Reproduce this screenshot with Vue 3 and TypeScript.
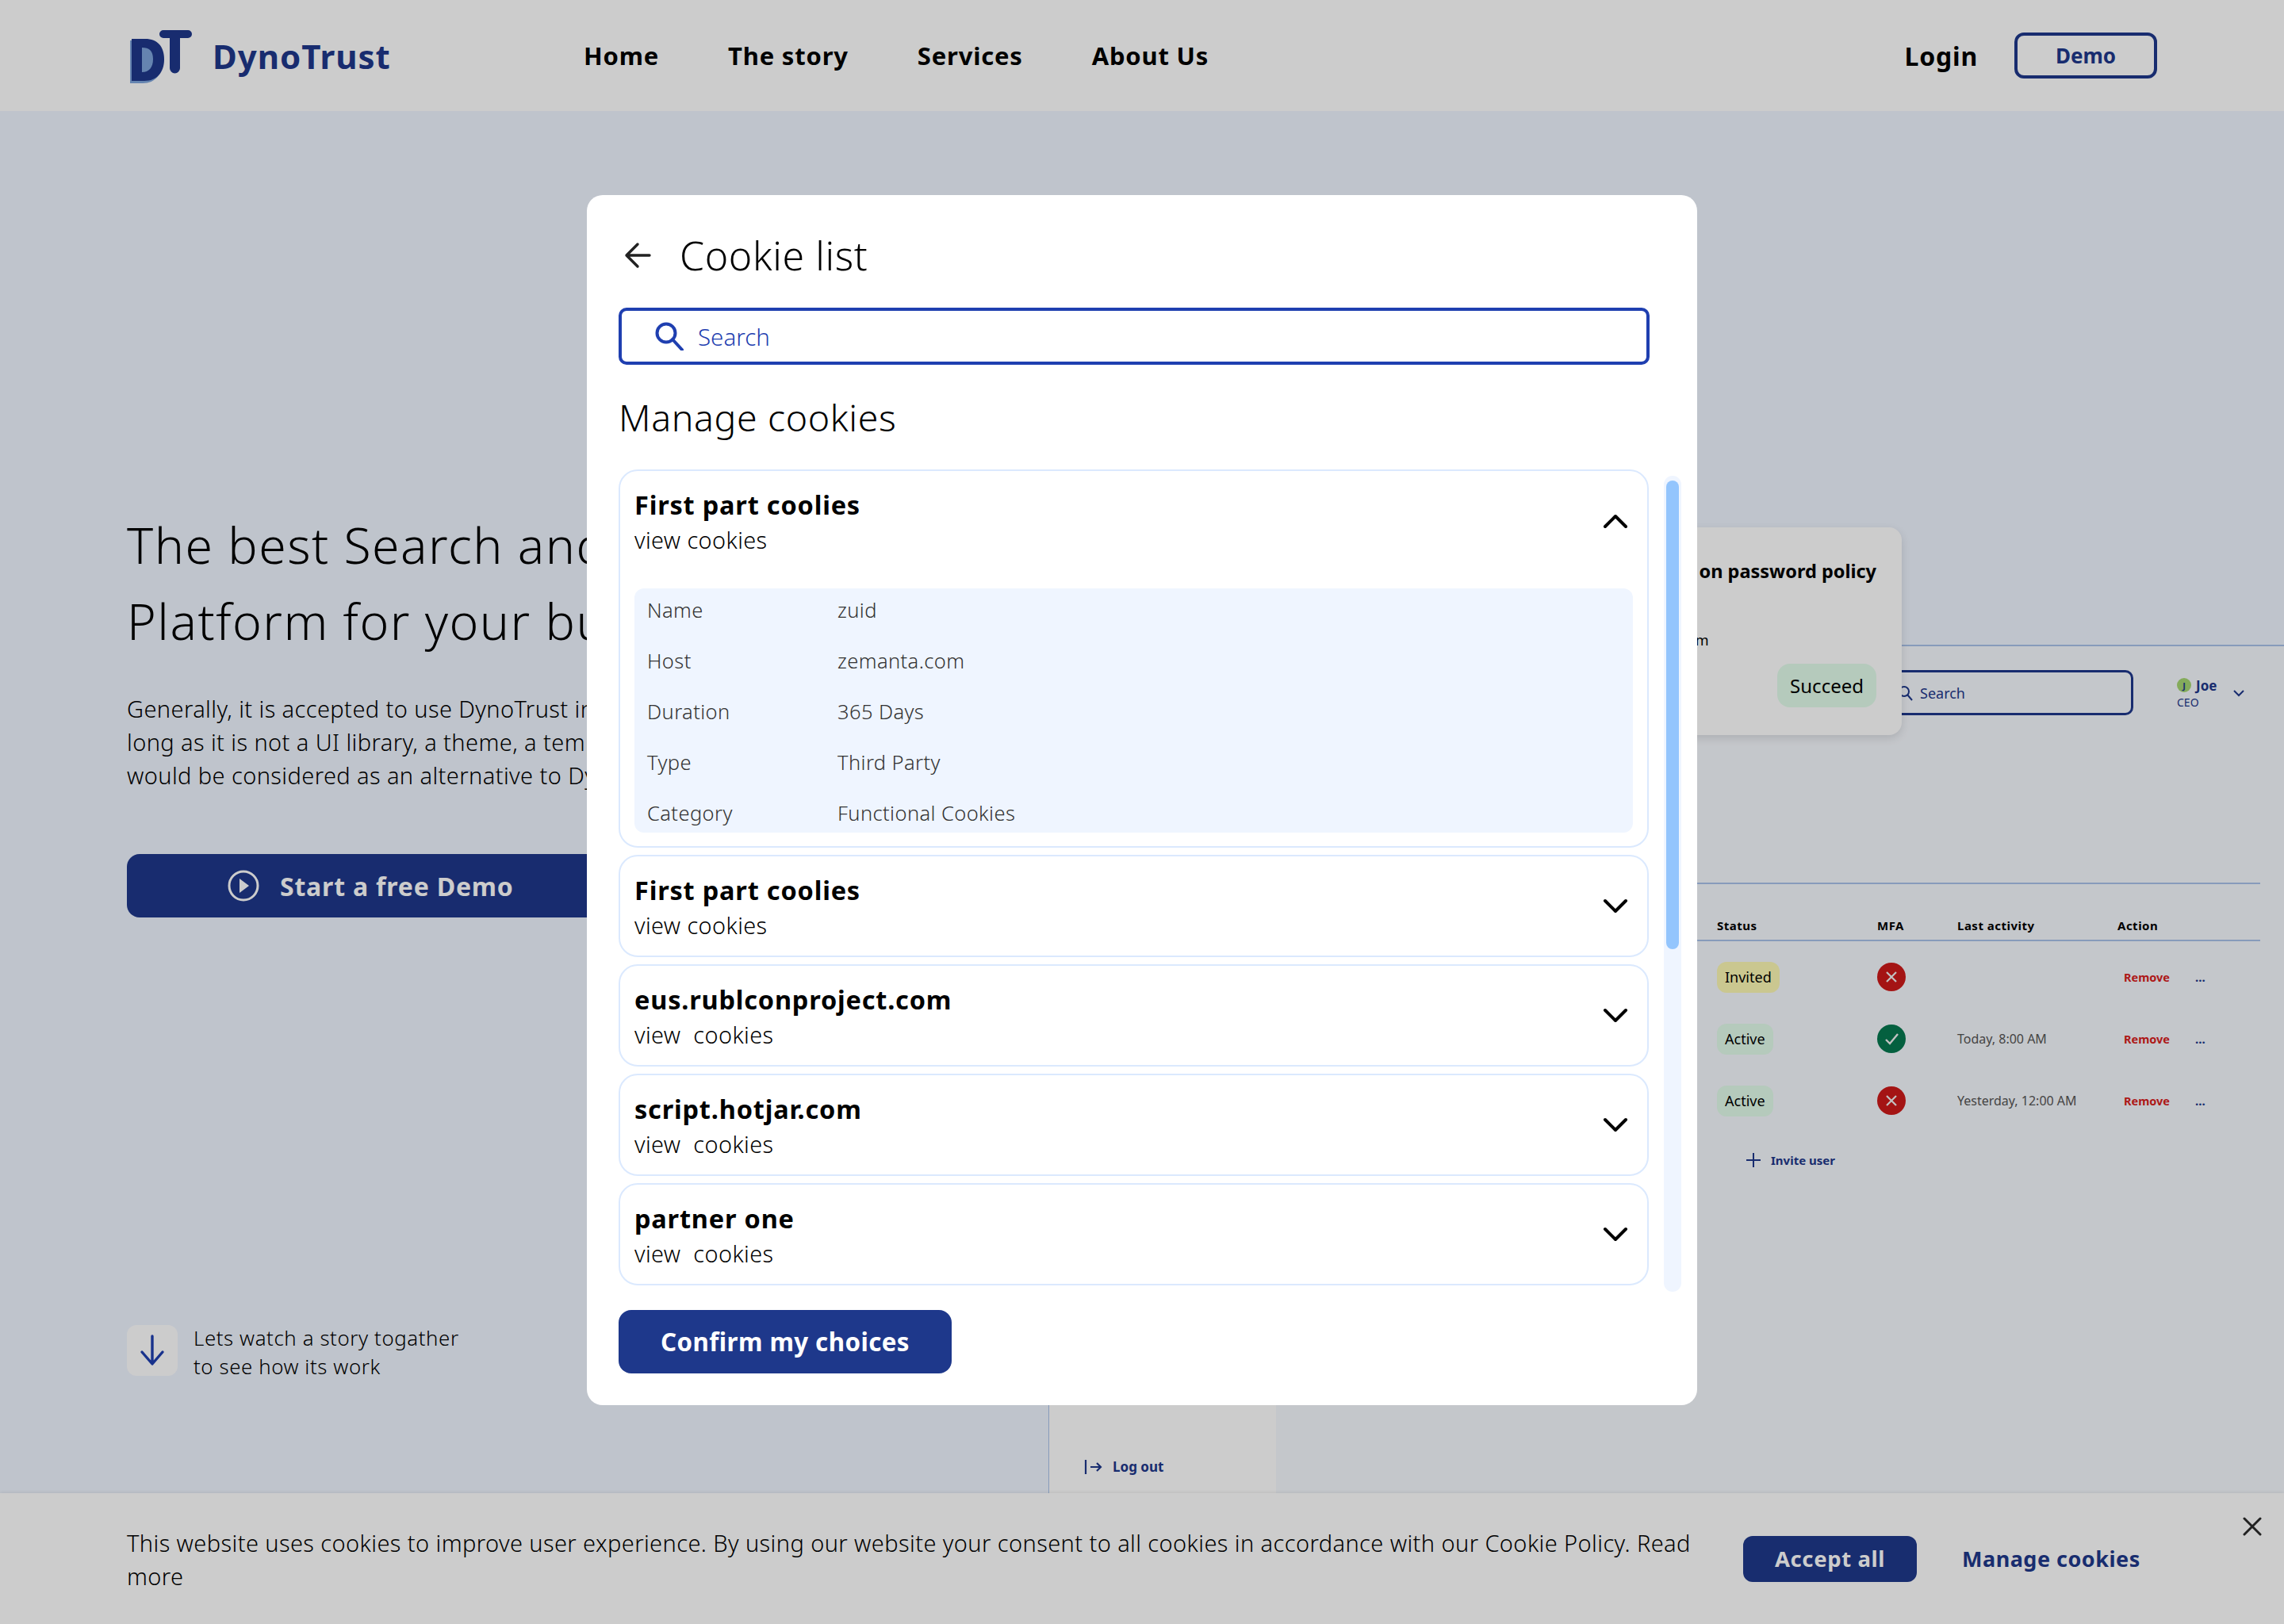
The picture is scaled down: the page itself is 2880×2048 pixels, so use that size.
<script setup lang="ts">
interface CookieGroup {
	title: string;
	sub: string;
	open?: boolean;
}

interface UserRow {
	status: string;
	kind: string;
	mfa: boolean;
	last: string;
}

const navLinks = ["Home", "The story", "Services", "About Us"];

const details = [
	{ label: "Name", value: "zuid" },
	{ label: "Host", value: "zemanta.com" },
	{ label: "Duration", value: "365 Days" },
	{ label: "Type", value: "Third Party" },
	{ label: "Category", value: "Functional Cookies" },
];

const groups: CookieGroup[] = [
	{ title: "First part coolies", sub: "view cookies", open: true },
	{ title: "First part coolies", sub: "view cookies" },
	{ title: "eus.rublconproject.com", sub: "view  cookies" },
	{ title: "script.hotjar.com", sub: "view  cookies" },
	{ title: "partner one", sub: "view  cookies" },
];

const users: UserRow[] = [
	{ status: "Invited", kind: "invited", mfa: false, last: "" },
	{ status: "Active", kind: "active", mfa: true, last: "Today, 8:00 AM" },
	{ status: "Active", kind: "active", mfa: false, last: "Yesterday, 12:00 AM" },
];
</script>

<template>
	<div class="page">
		<header class="topbar">
			<div class="brand">
				<svg class="logo" viewBox="0 0 80 70" width="80" height="70">
					<path d="M1 15h17c16 0 24 10 24 26s-9 28-25 28H1z" fill="#7fa6dc" />
					<path fill-rule="evenodd" d="M3 13h17c16 0 24 10 24 26s-9 27-25 27H3zM16 24v31c9 0 14-6 14-16.500S25 24 16 24z" fill="#1e388b" />
					<path d="M43 2h31a5 5 0 0 1 0 10H64v38a6.500 6.500 0 0 1-13 0V12h-8a5 5 0 0 1 0-10z" fill="#1e388b" />
				</svg>
				<span class="brand-name">DynoTrust</span>
			</div>
			<nav class="nav">
				<a v-for="link in navLinks" :key="link">{{ link }}</a>
			</nav>
			<div class="auth">
				<a class="login">Login</a>
				<button class="demo">Demo</button>
			</div>
		</header>

		<main class="hero">
			<section class="copy">
				<h1>The best Search and Management<br />Platform for your business</h1>
				<p class="lead">
					Generally, it is accepted to use DynoTrust in your work<br />
					long as it is not a UI library, a theme, a template or<br />
					would be considered as an alternative to DynoTrust
				</p>
				<button class="start">
					<svg viewBox="0 0 40 40" width="40" height="40">
						<circle cx="20" cy="20" r="18" fill="none" stroke="currentColor" stroke-width="3" />
						<path d="M15 11l12 9-12 9z" fill="currentColor" />
					</svg>
					Start a free Demo
				</button>
				<div class="story">
					<span class="story-icon">
						<svg viewBox="0 0 32 44" width="32" height="44">
							<path d="M16 4v34M3 24l13 15 13-15" fill="none" stroke="#1f3fb0" stroke-width="3.400" stroke-linecap="round" stroke-linejoin="round" />
						</svg>
					</span>
					<p>Lets watch a story togather<br />to see how its work</p>
				</div>
			</section>

			<section class="dash">
				<aside class="sidebar">
					<a class="logout">
						<svg viewBox="0 0 24 20" width="24" height="20">
							<path d="M2 1v18M8 10h13M16 5l5 5-5 5" fill="none" stroke="#1e388b" stroke-width="2.200" />
						</svg>
						Log out
					</a>
				</aside>
				<div class="dash-main">
					<div class="dash-top">
						<div class="mini-search">
							<svg viewBox="0 0 20 20" width="20" height="20">
								<circle cx="8" cy="8" r="6" fill="none" stroke="#1e388b" stroke-width="2" />
								<path d="M12 12l6 7" stroke="#1e388b" stroke-width="2" />
							</svg>
							Search
						</div>
						<div class="profile">
							<div class="profile-text">
								<div class="profile-name"><i>J</i>Joe</div>
								<div class="profile-role">CEO</div>
							</div>
							<svg viewBox="0 0 16 10" width="16" height="10">
								<path d="M2 2l6 6 6-6" fill="none" stroke="#1e388b" stroke-width="2" />
							</svg>
						</div>
					</div>
					<div class="table">
						<div class="table-row table-head">
							<span></span>
							<span>Status</span>
							<span>MFA</span>
							<span>Last activity</span>
							<span>Action</span>
						</div>
						<div v-for="(user, i) in users" :key="i" class="table-row">
							<span></span>
							<span><b class="pill" :class="user.kind">{{ user.status }}</b></span>
							<span class="mfa" :class="{ ok: user.mfa }">
								<svg v-if="user.mfa" viewBox="0 0 36 36" width="36" height="36">
									<path d="M11 19l5 5 10-12" fill="none" stroke="#f3f3f3" stroke-width="2.400" />
								</svg>
								<svg v-else viewBox="0 0 36 36" width="36" height="36">
									<path d="M12 12l12 12M24 12L12 24" fill="none" stroke="#f3f3f3" stroke-width="2.200" />
								</svg>
							</span>
							<span class="last">{{ user.last }}</span>
							<span class="actions"><a class="remove">Remove</a><a class="more">...</a></span>
						</div>
						<a class="invite">
							<svg viewBox="0 0 20 20" width="20" height="20">
								<path d="M10 1v18M1 10h18" stroke="#1e388b" stroke-width="2" />
							</svg>
							Invite user
						</a>
					</div>
				</div>
				<div class="toast">
					<strong>Notification on password policy</strong>
					<span class="toast-line">Confirm</span>
					<b class="pill-large">Succeed</b>
				</div>
			</section>
		</main>

		<div class="dim"></div>

		<footer class="cookie-bar">
			<p>
				This website uses cookies to improve user experience. By using our website your consent to all cookies in accordance with our Cookie Policy. Read more
			</p>
			<button class="accept">Accept all</button>
			<a class="manage">Manage cookies</a>
			<svg class="close" viewBox="0 0 24 24" width="24" height="24">
				<path d="M2 2l20 20M22 2L2 22" stroke="#222" stroke-width="3" stroke-linecap="round" />
			</svg>
		</footer>

		<div class="modal">
			<div class="modal-head">
				<svg viewBox="0 0 34 34" width="34" height="34">
					<path d="M32 17H3M17 3L3 17l14 14" fill="none" stroke="#222" stroke-width="3.400" stroke-linecap="round" stroke-linejoin="round" />
				</svg>
				<h2>Cookie list</h2>
			</div>
			<label class="search">
				<svg viewBox="0 0 36 36" width="36" height="36">
					<circle cx="14" cy="14" r="11.500" fill="none" stroke="#1f3fb0" stroke-width="4" />
					<path d="M22 22l12 13" stroke="#1f3fb0" stroke-width="4" stroke-linecap="round" />
				</svg>
				<span>Search</span>
			</label>
			<h3>Manage cookies</h3>
			<div class="list-wrap">
				<div class="list">
					<article v-for="(group, i) in groups" :key="i" class="group">
						<div class="group-head">
							<div>
								<div class="group-title">{{ group.title }}</div>
								<div class="group-sub">{{ group.sub }}</div>
							</div>
							<svg viewBox="0 0 32 20" width="32" height="20">
								<path :d="group.open ? 'M3 17L16 4l13 13' : 'M3 3l13 13L29 3'" fill="none" stroke="#000" stroke-width="4" stroke-linecap="round" stroke-linejoin="round" />
							</svg>
						</div>
						<dl v-if="group.open" class="detail">
							<div v-for="row in details" :key="row.label" class="detail-row">
								<dt>{{ row.label }}</dt>
								<dd>{{ row.value }}</dd>
							</div>
						</dl>
					</article>
				</div>
				<div class="track"><div class="thumb"></div></div>
			</div>
			<button class="confirm">Confirm my choices</button>
		</div>
	</div>
</template>

<style scoped>
.page {
	position: relative;
	width: 2880px;
	height: 2048px;
	overflow: hidden;
	background: #eff5ff;
	font-family: "Noto Sans", sans-serif;
	color: #000;
}

button {
	font-family: inherit;
	cursor: pointer;
}

.topbar {
	display: flex;
	align-items: center;
	height: 140px;
	padding: 0 160px 0 163px;
	background: #fff;
}

.brand {
	display: flex;
	align-items: center;
	gap: 25px;
	width: 573px;
}

.logo {
	margin-top: 2px;
}

.brand-name {
	font-size: 42px;
	font-weight: 700;
	letter-spacing: 1px;
	color: #1e388b;
}

.nav {
	display: flex;
	gap: 87px;
	font-size: 31px;
	font-weight: 700;
	letter-spacing: 0.8px;
}

.auth {
	display: flex;
	align-items: center;
	gap: 46px;
	margin-left: auto;
}

.login {
	font-size: 32px;
	font-weight: 700;
	letter-spacing: 0.8px;
}

.demo {
	width: 180px;
	height: 58px;
	border: 4px solid #1e388b;
	border-radius: 12px;
	background: transparent;
	font-size: 26px;
	font-weight: 700;
	color: #1e388b;
}

.hero {
	display: flex;
	height: 1908px;
}

.copy {
	width: 1322px;
	flex: none;
	padding: 499px 0 0 160px;
	box-sizing: border-box;
	white-space: nowrap;
}

h1 {
	margin: 0;
	font-size: 62.500px;
	font-weight: 350;
	line-height: 96px;
	letter-spacing: 1.5px;
}

.lead {
	margin: 42px 0 0;
	font-size: 29px;
	font-weight: 350;
	line-height: 42px;
	letter-spacing: 0.4px;
}

.start {
	display: flex;
	align-items: center;
	justify-content: flex-start;
	gap: 26px;
	width: 700px;
	height: 80px;
	margin-top: 78px;
	padding: 0 0 0 127px;
	border: 0;
	border-radius: 16px;
	background: #1e388b;
	color: #fff;
	font-size: 32px;
	font-weight: 700;
	letter-spacing: 0.8px;
}

.story {
	display: flex;
	gap: 20px;
	margin-top: 514px;
}

.story p {
	margin: -2px 0 0;
	font-size: 25.800px;
	font-weight: 350;
	line-height: 36px;
	letter-spacing: 0.6px;
}

.story-icon {
	display: flex;
	align-items: center;
	justify-content: center;
	width: 64px;
	height: 64px;
	border-radius: 12px;
	background: #fff;
}

.dash {
	position: relative;
	flex: 1;
	display: flex;
	margin-top: 673px;
	height: 1070px;
	background: #f6f9fe;
	border-top: 2px solid #a9c2ea;
	box-sizing: border-box;
}

.sidebar {
	display: flex;
	align-items: flex-end;
	width: 287px;
	flex: none;
	box-sizing: border-box;
	padding: 0 0 22px 44px;
	background: #fff;
	border-left: 1px solid #a9c2ea;
}

.logout {
	display: flex;
	align-items: center;
	gap: 12px;
	font-size: 17px;
	font-weight: 700;
	color: #1e388b;
}

.dash-main {
	flex: 1;
	padding-right: 30px;
}

.dash-top {
	display: flex;
	height: 300px;
	border-bottom: 2px solid #a9c2ea;
	box-sizing: border-box;
	padding-top: 30px;
}

.mini-search {
	display: flex;
	align-items: center;
	gap: 8px;
	width: 541px;
	height: 57px;
	margin-left: 540px;
	padding-left: 241px;
	box-sizing: border-box;
	border: 3px solid #1e388b;
	border-radius: 10px;
	font-size: 18px;
	color: #1e388b;
}

.profile {
	display: flex;
	align-items: center;
	gap: 20px;
	margin-left: 55px;
	height: 57px;
}

.profile-name {
	display: flex;
	align-items: center;
	gap: 6px;
	font-size: 17px;
	font-weight: 700;
	color: #1e388b;
}

.profile-name i {
	display: flex;
	align-items: center;
	justify-content: center;
	width: 18px;
	height: 18px;
	border-radius: 50%;
	background: #a6d672;
	font-size: 11px;
	font-style: normal;
}

.profile-role {
	font-size: 14px;
	color: #1e388b;
}

.table {
	padding-bottom: 6px;
}

.table-row {
	display: grid;
	grid-template-columns: 556px 202px 101px 202px 1fr;
	align-items: center;
	height: 78px;
	font-size: 17px;
}

.table-head {
	height: 72px;
	margin-bottom: 6px;
	padding-top: 34px;
	box-sizing: border-box;
	border-bottom: 2px solid #a9c2ea;
	font-size: 15px;
	font-weight: 700;
	letter-spacing: 0.5px;
}

.pill {
	display: inline-block;
	padding: 0 10px;
	height: 39px;
	line-height: 39px;
	border-radius: 12px;
	font-size: 18px;
	font-weight: 400;
}

.invited {
	background: #fdf9b4;
}

.active {
	background: #e3fdec;
}

.mfa svg {
	display: block;
	border-radius: 50%;
	background: #ce1a1a;
}

.mfa.ok svg {
	background: #06784f;
}

.last {
	font-size: 16px;
	color: #555;
}

.actions {
	display: flex;
	align-items: center;
	gap: 32px;
	padding-left: 8px;
}

.remove {
	font-size: 14.500px;
	font-weight: 700;
	color: #d91e1e;
}

.more {
	font-size: 15px;
	font-weight: 700;
	color: #1e388b;
}

.invite {
	display: flex;
	align-items: center;
	gap: 12px;
	margin: 26px 0 0 592px;
	font-size: 15px;
	font-weight: 700;
	color: #1e388b;
}

.toast {
	position: absolute;
	top: -150px;
	left: 576px;
	display: flex;
	flex-direction: column;
	align-items: flex-end;
	width: 500px;
	height: 262px;
	box-sizing: border-box;
	padding: 38px 32px 0 0;
	border-radius: 16px;
	background: #fff;
	box-shadow: 0 4px 12px rgba(0, 0, 0, 0.12);
}

.toast strong {
	font-size: 23.500px;
	line-height: 34px;
}

.toast-line {
	align-self: flex-start;
	margin-top: 58px;
	padding-left: 188px;
	font-size: 18px;
	line-height: 24px;
}

.pill-large {
	display: block;
	margin-top: 18px;
	padding: 0 16px;
	height: 55px;
	line-height: 55px;
	border-radius: 16px;
	background: #e3fdec;
	font-size: 24px;
	font-weight: 400;
}

.dim {
	position: absolute;
	inset: 0;
	background: rgba(0, 0, 0, 0.2);
}

.cookie-bar {
	position: absolute;
	left: 0;
	right: 0;
	bottom: 0;
	display: flex;
	align-items: center;
	height: 165px;
	padding: 0 0 0 160px;
	box-sizing: border-box;
	background: #ccc;
	box-shadow: 0 -1px 4px rgba(0, 0, 0, 0.08);
}

.cookie-bar p {
	width: 2000px;
	margin: 2px 38px 0 0;
	font-size: 29px;
	font-weight: 350;
	line-height: 42px;
	letter-spacing: 0.4px;
}

.accept {
	width: 219px;
	height: 58px;
	border: 0;
	border-radius: 12px;
	background: #182d6f;
	color: #ccc;
	font-size: 27.500px;
	font-weight: 700;
	letter-spacing: 0.6px;
}

.manage {
	margin-left: 57px;
	font-size: 27px;
	font-weight: 700;
	letter-spacing: 0.5px;
	color: #182d6f;
}

.close {
	position: absolute;
	top: 30px;
	right: 28px;
}

.modal {
	position: absolute;
	top: 246px;
	left: 740px;
	display: flex;
	flex-direction: column;
	width: 1400px;
	height: 1526px;
	box-sizing: border-box;
	padding: 0 20px 0 40px;
	border-radius: 20px;
	background: #fff;
}

.modal-head {
	display: flex;
	align-items: center;
	gap: 36px;
	height: 142px;
	box-sizing: border-box;
	padding: 10px 0 0 7px;
}

h2 {
	margin: 0;
	font-size: 50px;
	font-weight: 300;
	letter-spacing: 0.6px;
}

.search {
	display: flex;
	align-items: center;
	gap: 18px;
	width: 1300px;
	height: 72px;
	box-sizing: border-box;
	padding-left: 42px;
	border: 4px solid #1f3fb0;
	border-radius: 10px;
	font-size: 29.500px;
	font-weight: 350;
	color: #1f3fb0;
}

h3 {
	margin: 38px 0 0;
	font-size: 46.500px;
	font-weight: 300;
	line-height: 56px;
	letter-spacing: 0.6px;
}

.list-wrap {
	display: flex;
	gap: 19px;
	margin-top: 38px;
}

.list {
	display: flex;
	flex-direction: column;
	gap: 9px;
	width: 1300px;
	height: 1037px;
	overflow: hidden;
}

.group {
	flex: none;
	box-sizing: border-box;
	padding: 0 18px;
	border: 2px solid #dbe9fe;
	border-radius: 24px;
}

.group-head {
	display: flex;
	align-items: center;
	justify-content: space-between;
	height: 125px;
	padding-right: 6px;
}

.group-title {
	font-size: 32.500px;
	font-weight: 700;
	letter-spacing: 0.8px;
}

.group-sub {
	margin-top: 2px;
	font-size: 28.900px;
	font-weight: 350;
	letter-spacing: 0.4px;
	white-space: pre;
}

.detail {
	margin: 23px 0 17px;
	height: 308px;
	border-radius: 12px;
	background: #eff5ff;
	overflow: hidden;
}

.detail-row {
	display: grid;
	grid-template-columns: 240px 1fr;
	align-items: center;
	height: 64px;
	padding-left: 16px;
	font-size: 25.500px;
	font-weight: 350;
	letter-spacing: 0.4px;
	color: #333;
}

.detail-row:first-child {
	margin-top: -5px;
}

.detail-row dd {
	margin: 0;
}

.track {
	width: 22px;
	height: 1029px;
	margin-top: 8px;
	padding: 6px 3px 0;
	box-sizing: border-box;
	border-radius: 11px;
	background: #eff5ff;
}

.thumb {
	height: 591px;
	border-radius: 8px;
	background: #93c5fd;
}

.confirm {
	width: 420px;
	height: 80px;
	margin-top: 23px;
	border: 0;
	border-radius: 16px;
	background: #1e388b;
	color: #fff;
	font-size: 31.300px;
	font-weight: 700;
	letter-spacing: 0.4px;
}
</style>

<style>
html,
body {
	margin: 0;
}
</style>
